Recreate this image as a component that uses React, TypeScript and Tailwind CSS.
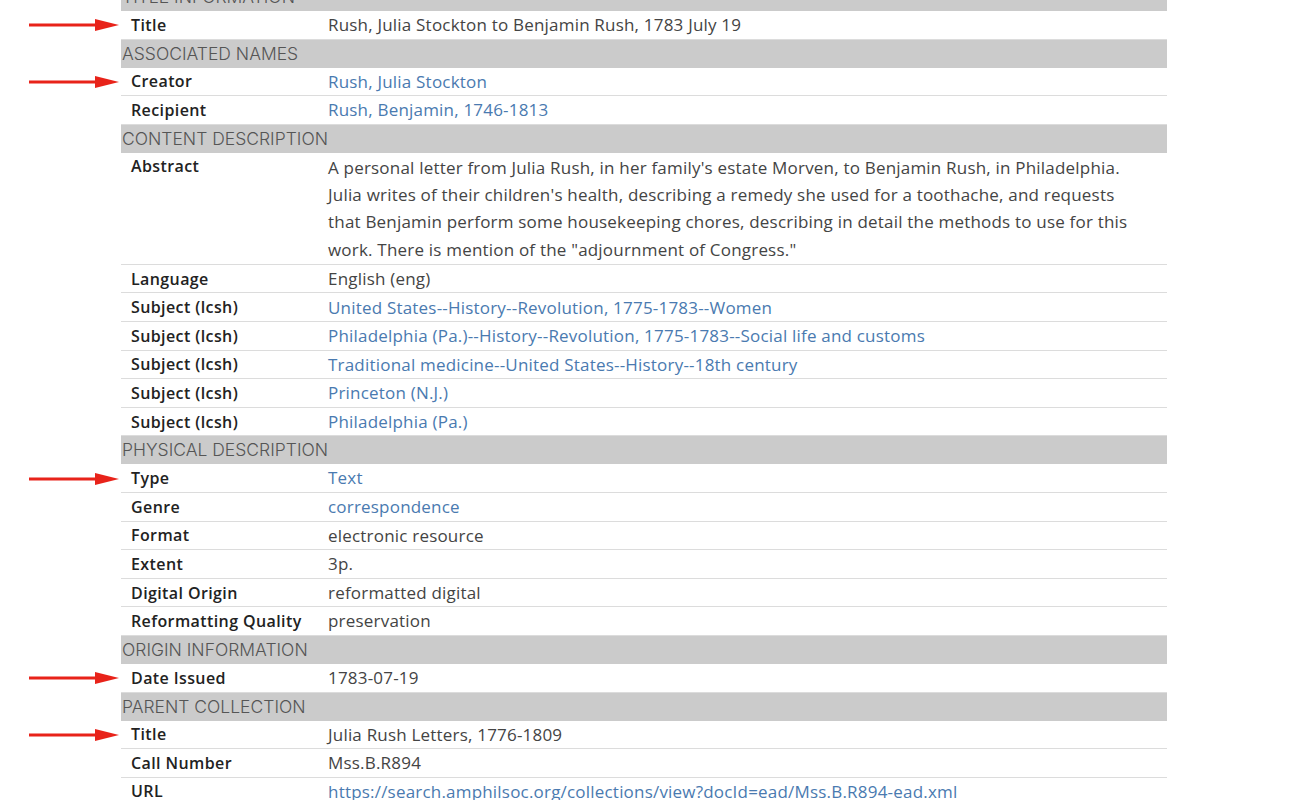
import React from "react";

type R = { h?: string; l?: string; v?: string; link?: boolean; arrow?: boolean; tall?: boolean };
const rows: R[] = [
  { h: "TITLE INFORMATION" },
  { l: "Title", v: "Rush, Julia Stockton to Benjamin Rush, 1783 July 19", arrow: true },
  { h: "ASSOCIATED NAMES" },
  { l: "Creator", v: "Rush, Julia Stockton", link: true, arrow: true },
  { l: "Recipient", v: "Rush, Benjamin, 1746-1813", link: true },
  { h: "CONTENT DESCRIPTION" },
  { l: "Abstract", tall: true, v: "A personal letter from Julia Rush, in her family's estate Morven, to Benjamin Rush, in Philadelphia. Julia writes of their children's health, describing a remedy she used for a toothache, and requests that Benjamin perform some housekeeping chores, describing in detail the methods to use for this work. There is mention of the \"adjournment of Congress.\"" },
  { l: "Language", v: "English (eng)" },
  { l: "Subject (lcsh)", v: "United States--History--Revolution, 1775-1783--Women", link: true },
  { l: "Subject (lcsh)", v: "Philadelphia (Pa.)--History--Revolution, 1775-1783--Social life and customs", link: true },
  { l: "Subject (lcsh)", v: "Traditional medicine--United States--History--18th century", link: true },
  { l: "Subject (lcsh)", v: "Princeton (N.J.)", link: true },
  { l: "Subject (lcsh)", v: "Philadelphia (Pa.)", link: true },
  { h: "PHYSICAL DESCRIPTION" },
  { l: "Type", v: "Text", link: true, arrow: true },
  { l: "Genre", v: "correspondence", link: true },
  { l: "Format", v: "electronic resource" },
  { l: "Extent", v: "3p." },
  { l: "Digital Origin", v: "reformatted digital" },
  { l: "Reformatting Quality", v: "preservation" },
  { h: "ORIGIN INFORMATION" },
  { l: "Date Issued", v: "1783-07-19", arrow: true },
  { h: "PARENT COLLECTION" },
  { l: "Title", v: "Julia Rush Letters, 1776-1809", arrow: true },
  { l: "Call Number", v: "Mss.B.R894" },
  { l: "URL", v: "https://search.amphilsoc.org/collections/view?docId=ead/Mss.B.R894-ead.xml", link: true },
];

const Arrow = () => (
  <svg width="90" height="12" viewBox="0 0 90 12" className="ml-[29px]">
    <rect x="0" y="4.5" width="70" height="3" fill="#e8231a" />
    <polygon points="66,0 90,6 66,12" fill="#e8231a" />
  </svg>
);

export default function App() {
  return (
    <div className="w-[1300px] h-[800px] overflow-hidden bg-white" style={{ fontFamily: "'Open Sans', sans-serif" }}>
      <div className="mt-[-17px] flex flex-col">
        {rows.map((r, i) =>
          r.h ? (
            <div key={i} className="flex">
              <div className="w-[121px] shrink-0" />
              <div className="w-[1046px] h-[28px] bg-[#cbcbcb] text-[#555] text-[17.5px] leading-[28px] pl-[1px]" style={{ fontFamily: "Inter, sans-serif", fontWeight: 300 }}>
                {r.h}
              </div>
            </div>
          ) : (
            <div key={i} className="flex items-stretch">
              <div className="w-[121px] shrink-0 flex items-center">{r.arrow && <Arrow />}</div>
              <div className={`w-[1046px] flex border-b border-[#dcdcdc] ${r.tall ? "h-[112px] pt-[1px]" : "h-[28.6px] items-center"}`}>
                <div className="w-[207px] shrink-0 pl-[10px] text-[16px] text-[#222] font-semibold tracking-[0.4px]">{r.l}</div>
                <div className={`text-[17px] leading-[27.3px] pr-[36px] tracking-[0.2px] ${r.link ? "text-[#4a7ab0]" : "text-[#444]"}`}>{r.v}</div>
              </div>
            </div>
          )
        )}
      </div>
    </div>
  );
}
